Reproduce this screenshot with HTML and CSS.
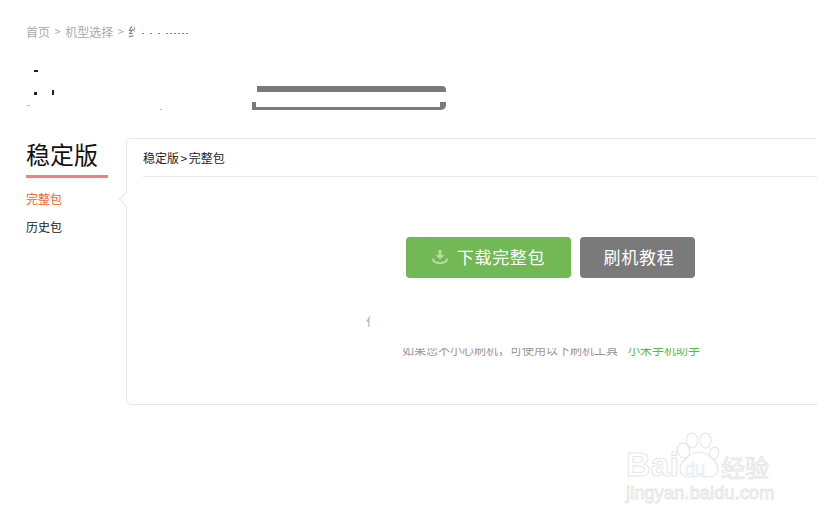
FILE: index.html
```html
<!DOCTYPE html>
<html lang="zh-CN">
<head>
    <meta charset="utf-8">
    <title>稳定版 完整包</title>
    <link rel="stylesheet" href="styles.css">
</head>
<body>
    <div class="crumbs">
        <a>首页</a><span class="sep">&gt;</span><a>机型选择</a><span class="sep">&gt;</span><span class="cut">约</span>
        <span class="dots"><i></i><i></i><i></i><i class="wide"></i></span>
    </div>

    <div class="phone-head">
        <svg class="specks" width="226" height="60" viewBox="0 0 226 60">
            <rect x="8" y="0" width="4" height="2" fill="#222"/>
            <rect x="8" y="22" width="3" height="3" fill="#222"/>
            <rect x="26" y="20" width="2" height="5" fill="#222"/>
            <rect x="1" y="35" width="3" height="1" fill="#bbb"/>
            <rect x="134" y="39" width="2" height="1" fill="#bbb"/>
        </svg>
        <div class="hidden-box">
            <div class="box-top"></div>
            <div class="box-bottom"></div>
        </div>
    </div>

    <div class="main">
        <div class="side">
            <h2>稳定版</h2>
            <ul>
                <li class="on">完整包</li>
                <li>历史包</li>
            </ul>
        </div>
        <div class="panel">
            <div class="panel-title">稳定版<span class="gt">&gt;</span>完整包</div>
            <div class="btns">
                <a class="btn btn-green">
                    <svg width="16" height="14" viewBox="0 0 16 14">
                        <path d="M6.5 0h3v5h3L8 9.500 3.500 5h3z" fill="#b5dca6"/>
                        <path d="M1 8.500c0 3 3 4.500 7 4.500s7-1.500 7-4.500" fill="none" stroke="#b5dca6" stroke-width="2"/>
                    </svg>
                    下载完整包
                </a>
                <a class="btn btn-gray">刷机教程</a>
            </div>
            <div class="tip-cut">仆</div>
            <div class="tip">
                <span>如果您不小心刷机，可使用以下刷机工具</span><a>小米手机助手</a>
            </div>
        </div>
    </div>

    <div class="mark">
        <svg class="paw" width="46" height="46" viewBox="0 0 46 46">
            <g fill="#fff" stroke="#e6e6e6" stroke-width="1.200">
                <ellipse cx="7.500" cy="18.500" rx="6" ry="7.500" transform="rotate(-20 7.500 18.500)"/>
                <ellipse cx="16" cy="8.500" rx="5.500" ry="7.500"/>
                <ellipse cx="29.500" cy="8.500" rx="5.500" ry="7.500"/>
                <ellipse cx="38" cy="21.500" rx="4.500" ry="6.500" transform="rotate(20 38 21.500)"/>
                <path d="M23 20c7 0 19 9 19 17 0 6-5 8-10 8-4 0-6-1-9-1s-5 1-9 1c-5 0-10-2-10-8 0-8 12-17 19-17z"/>
            </g>
        </svg>
        <span class="bai">Bai</span>
        <span class="du">du</span>
        <span class="jy">经验</span>
        <span class="url">jingyan.baidu.com</span>
    </div>
</body>
</html>
```

FILE: styles.css
```css
* {
    box-sizing: border-box;
}
html, body {
    overflow: hidden;
}
body {
    margin: 0;
    height: 520px;
    position: relative;
    background: #fff;
    font-family: "Noto Sans CJK SC", "Liberation Sans", sans-serif;
    font-size: 12px;
    color: #222;
}
.crumbs {
    display: flex;
    align-items: center;
    height: 16px;
    margin: 23px 0 1px 26px;
    color: #aaa;
}
.sep {
    margin: 0 4.500px;
    font-size: 11px;
}
.cut {
    width: 7px;
    overflow: hidden;
    color: #777;
}
.dots {
    display: flex;
    align-items: flex-end;
    gap: 6px;
    height: 6px;
    margin-left: 7px;
}
.dots i {
    width: 2px;
    height: 1px;
    background: #888;
}
.dots i.wide {
    width: 24px;
    background: repeating-linear-gradient(90deg, #888 0 2px, #fff 2px 4px);
}
.phone-head {
    display: flex;
    align-items: flex-start;
    height: 98px;
    padding: 30px 0 0 26px;
}
.specks {
    flex: none;
}
.hidden-box {
    display: flex;
    flex-direction: column;
    justify-content: space-between;
    width: 194px;
    height: 24px;
    margin-top: 16px;
}
.box-top {
    height: 6px;
    margin-left: 5px;
    background: #7a7a7a;
    border-radius: 0 4px 0 0;
}
.box-bottom {
    height: 8px;
    background: #fff;
    border-style: solid;
    border-color: #7a7a7a;
    border-width: 0 6px 3px 4px;
    border-radius: 0 0 5px 0;
}
.main {
    display: flex;
    align-items: flex-start;
    padding-left: 26px;
}
.side {
    flex: none;
    width: 82px;
    margin-right: 18px;
}
.side h2 {
    margin: 0;
    height: 40px;
    font-size: 24px;
    line-height: 32px;
    font-weight: normal;
    color: #111;
    border-bottom: 3px solid #f77c7c;
}
.side ul {
    list-style: none;
    margin: 7px 0 0;
    padding: 0;
}
.side li {
    height: 28px;
    line-height: 27px;
}
.side li.on {
    color: #f0602a;
}
.panel {
    position: relative;
    flex: none;
    width: 720px;
    height: 267px;
    padding: 0 0 0 16px;
    border: 1px solid #e6e6e6;
    border-radius: 5px 0 0 5px;
}
/* small notch pointing at the active item */
.panel::before {
    content: "";
    position: absolute;
    left: -6px;
    top: 55px;
    width: 10px;
    height: 10px;
    background: #fff;
    border-left: 1px solid #e6e6e6;
    border-bottom: 1px solid #e6e6e6;
    transform: rotate(45deg);
}
.panel-title {
    height: 38px;
    line-height: 38px;
    border-bottom: 1px solid #e6e6e6;
    color: #222;
}
.gt {
    margin: 0 1.500px;
}
.btns {
    display: flex;
    gap: 9px;
    margin: 60px 0 0 263px;
}
.btn {
    display: flex;
    align-items: center;
    justify-content: center;
    height: 41px;
    padding-bottom: 2px;
    border-radius: 4px;
    color: #fff;
    font-size: 17px;
    letter-spacing: 0.700px;
}
.btn svg {
    margin-right: 9px;
}
.btn-green {
    width: 165px;
    background: #72b854;
}
.btn-gray {
    width: 115px;
    padding-left: 3px;
    background: #7a7a7a;
}
.tip-cut {
    width: 4px;
    height: 14px;
    margin: 36px 0 0 223px;
    overflow: hidden;
    line-height: 14px;
    color: #aaa;
}
.tip {
    display: flex;
    align-items: flex-end;
    height: 8px;
    margin: 20px 0 0 259px;
    overflow: hidden;
    line-height: 12px;
    color: #999;
}
.tip a {
    margin-left: 10px;
    color: #5fbb3c;
}
.mark {
    position: absolute;
    left: 610px;
    top: 420px;
    width: 207px;
    height: 100px;
    color: #fff;
    font-family: "Liberation Sans", sans-serif;
    -webkit-text-stroke: 1px #e6e6e6;
}
.paw {
    position: absolute;
    left: 66px;
    top: 12px;
}
.bai {
    position: absolute;
    left: 16px;
    top: 27px;
    font-size: 34px;
    line-height: 34px;
    font-weight: bold;
}
.du {
    position: absolute;
    left: 75px;
    top: 39px;
    font-size: 18px;
    line-height: 20px;
    -webkit-text-stroke: 0.500px #dcdcdc;
}
.jy {
    position: absolute;
    left: 111px;
    top: 33px;
    font-family: "Noto Sans CJK SC", sans-serif;
    font-size: 24px;
    line-height: 28px;
}
.url {
    position: absolute;
    left: 16px;
    top: 62px;
    font-size: 18px;
    line-height: 22px;
    letter-spacing: 0.200px;
}
```
